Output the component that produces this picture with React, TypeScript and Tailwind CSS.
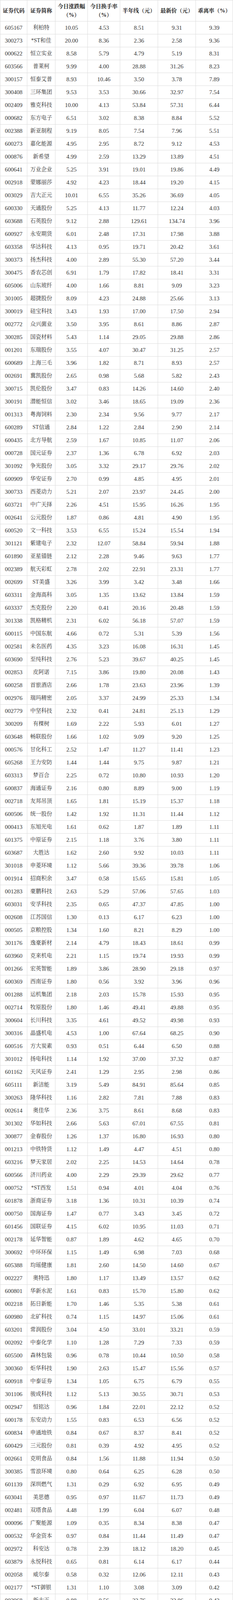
import React from "react";

const raw = `605167 利柏特 10.05 4.53 8.51 9.31 9.39
300273 *ST和佳 20.00 8.36 2.36 2.58 9.36
000622 恒立实业 8.58 5.79 4.79 5.19 8.31
603566 普莱柯 9.99 4.00 28.88 31.26 8.23
300157 恒泰艾普 8.93 10.46 3.50 3.78 7.89
300408 三环集团 9.53 3.53 30.66 32.97 7.54
002409 雅克科技 10.00 4.13 53.84 57.31 6.44
000682 东方电子 6.51 3.02 8.38 8.84 5.52
002388 新亚制程 9.19 8.05 7.54 7.96 5.51
600273 嘉化能源 4.95 2.95 8.72 9.12 4.53
000876 新希望 4.99 2.59 13.29 13.89 4.51
600641 万业企业 5.25 3.91 19.01 19.86 4.49
002918 蒙娜丽莎 4.92 4.23 18.44 19.20 4.15
003029 吉大正元 10.01 6.55 35.26 36.69 4.05
600330 天通股份 5.25 4.13 11.77 12.24 4.03
603688 石英股份 9.12 2.88 129.61 134.74 3.96
600927 永安期货 6.01 2.48 17.31 17.98 3.88
603358 华达科技 4.13 0.95 19.71 20.42 3.61
300373 扬杰科技 4.00 2.89 55.30 57.20 3.44
300475 香农芯创 6.91 1.79 17.82 18.41 3.31
605006 山东玻纤 4.00 1.66 8.81 9.09 3.23
301005 超捷股份 8.09 4.23 24.88 25.66 3.13
300019 硅宝科技 3.43 1.93 17.00 17.50 2.94
002772 众兴菌业 3.50 3.95 8.61 8.86 2.87
300285 国瓷材料 5.43 1.14 29.05 29.88 2.86
001201 东瑞股份 3.55 4.07 30.47 31.25 2.57
600689 上海三毛 3.96 1.82 8.71 8.93 2.57
002691 冀凯股份 2.65 0.98 5.68 5.82 2.43
300715 凯伦股份 3.47 0.83 14.26 14.60 2.40
300191 潜能恒信 3.02 3.46 18.65 19.09 2.36
001313 粤海饲料 2.30 2.34 9.56 9.77 2.17
600289 ST信通 2.84 1.22 2.84 2.90 2.14
600435 北方导航 2.59 1.67 10.85 11.07 2.06
000728 国元证券 2.37 1.36 6.78 6.92 2.03
301092 争光股份 3.05 3.32 29.17 29.76 2.02
600909 华安证券 2.70 0.99 4.85 4.95 2.01
300733 西菱动力 5.21 2.07 23.97 24.45 2.00
603721 中广天择 2.26 4.51 15.95 16.26 1.95
002641 公元股份 1.87 0.86 4.81 4.90 1.95
600520 文一科技 3.53 6.55 15.24 15.54 1.94
301121 紫建电子 2.32 12.07 58.84 59.94 1.88
601890 亚星锚链 2.12 2.28 9.46 9.63 1.77
002389 航天彩虹 2.78 2.02 22.91 23.31 1.77
002699 ST美盛 3.26 3.99 3.42 3.48 1.66
603311 金海高科 3.05 1.35 13.62 13.84 1.59
603337 杰克股份 2.20 0.41 20.16 20.48 1.59
301338 凯格精机 2.31 6.02 56.18 57.07 1.59
600115 中国东航 4.66 0.72 5.31 5.39 1.56
002581 未名医药 4.35 3.23 16.08 16.31 1.45
603690 至纯科技 2.76 5.23 39.67 40.25 1.45
002853 皮阿诺 7.15 3.86 19.80 20.08 1.43
600258 首旅酒店 2.66 1.78 23.63 23.96 1.39
002976 瑞玛精密 2.05 3.37 24.99 25.33 1.34
002779 中坚科技 2.32 0.41 24.81 25.13 1.29
300209 有棵树 1.69 2.22 5.93 6.01 1.27
603648 畅联股份 1.66 1.02 9.09 9.20 1.25
000576 甘化科工 2.52 1.47 11.27 11.41 1.23
605268 王力安防 1.44 1.44 9.75 9.87 1.21
603313 梦百合 2.25 0.72 10.80 10.93 1.20
600837 海通证券 2.16 0.80 8.89 9.00 1.19
002718 友邦吊顶 1.65 1.81 15.19 15.37 1.18
600506 统一股份 1.42 1.92 11.31 11.44 1.12
000413 东旭光电 1.61 0.62 1.87 1.89 1.11
601375 中原证券 2.15 1.18 3.76 3.80 1.11
603687 大胜达 1.62 2.60 9.92 10.03 1.11
301018 申菱环境 1.12 5.66 39.36 39.78 1.06
001914 招商积余 3.47 0.58 15.65 15.81 1.05
001283 豪鹏科技 2.63 5.29 57.06 57.65 1.03
603031 安孚科技 2.35 0.65 47.37 47.85 1.00
002608 江苏国信 1.30 0.13 6.17 6.23 1.00
000505 京粮控股 1.34 1.60 8.21 8.29 1.00
301176 逸豪新材 2.14 4.79 18.43 18.61 0.99
603960 克来机电 2.21 1.15 19.74 19.93 0.99
001266 宏英智能 1.89 3.86 28.90 29.18 0.97
600369 西南证券 1.80 0.56 3.92 3.96 0.96
001288 运机集团 2.18 2.03 15.78 15.93 0.95
002714 牧原股份 1.80 1.46 49.41 49.88 0.95
300604 长川科技 3.35 4.61 49.52 49.98 0.93
300316 晶盛机电 4.53 1.00 67.64 68.25 0.90
600516 方大炭素 0.93 0.51 6.44 6.50 0.88
301012 扬电科技 1.14 1.92 37.00 37.32 0.87
601162 天风证券 2.41 1.29 2.95 2.98 0.86
605111 新洁能 3.19 5.49 84.91 85.64 0.85
300263 隆华科技 1.16 2.82 7.81 7.88 0.83
002614 奥佳华 2.36 3.75 8.61 8.68 0.83
301302 华如科技 2.66 5.63 67.01 67.55 0.81
300877 金春股份 1.26 1.37 16.80 16.93 0.80
001213 中铁特货 1.12 1.49 4.47 4.51 0.80
603216 梦天家居 2.02 2.25 14.53 14.64 0.78
600566 济川药业 4.00 2.29 29.39 29.62 0.77
000752 *ST西发 1.51 0.94 4.01 4.04 0.76
601878 浙商证券 3.18 1.36 10.31 10.39 0.74
000750 国海证券 1.47 0.77 3.43 3.45 0.72
601456 国联证券 4.15 6.02 10.95 11.03 0.71
002178 延华智能 0.87 1.89 4.62 4.65 0.70
300692 中环环保 1.15 1.49 6.98 7.03 0.68
605388 均瑶健康 1.81 2.60 14.50 14.60 0.67
002227 奥特迅 1.80 1.17 13.49 13.57 0.62
600801 华新水泥 1.61 0.83 15.70 15.80 0.62
002218 拓日新能 1.70 1.46 5.35 5.38 0.61
600980 北矿科技 0.74 1.15 14.97 15.06 0.61
603201 常润股份 3.04 4.50 33.01 33.21 0.59
002092 中泰化学 1.10 1.28 7.29 7.33 0.59
605500 森林包装 0.96 0.78 10.44 10.50 0.58
300360 炬华科技 1.90 2.63 15.47 15.56 0.57
600918 中泰证券 1.34 1.05 6.75 6.79 0.55
301106 骏成科技 1.12 5.13 30.55 30.71 0.53
002947 恒铭达 0.96 1.84 22.01 22.12 0.52
600178 东安动力 1.55 0.83 6.53 6.56 0.52
600834 申通地铁 0.84 0.67 8.37 8.41 0.52
600429 三元股份 0.81 0.39 4.92 4.95 0.52
002661 克明食品 0.84 1.56 11.88 11.94 0.50
300385 雪浪环境 0.80 0.64 6.25 6.28 0.50
601139 深圳燃气 1.31 0.29 6.92 6.95 0.49
603041 美思德 0.95 0.97 11.67 11.73 0.49
002481 双塔食品 4.48 1.99 6.04 6.07 0.48
000096 广聚能源 1.09 0.35 8.34 8.38 0.47
000532 华金资本 0.97 0.84 11.44 11.49 0.47
002972 科安达 0.78 2.39 18.12 18.20 0.45
603879 永悦科技 0.65 0.81 6.14 6.17 0.44
002058 威尔泰 0.58 0.32 12.06 12.11 0.43
002177 *ST御银 1.31 1.10 3.08 3.09 0.42
002968 新大正 0.88 0.56 22.76 22.86 0.42
600739 辽宁成大 1.08 0.46 13.11 13.16 0.42
000672 上峰水泥 1.45 0.77 11.87 11.92 0.40
000059 华锦股份 1.21 2.39 7.50 7.53 0.39
603012 创力集团 0.69 1.01 5.80 5.82 0.38
002391 长青股份 0.68 0.97 7.36 7.39 0.36
834415 恒拓开源 1.02 0.17 3.97 3.98 0.33
605151 西上海 2.96 3.18 20.47 20.54 0.32
600182 S*ST佳通 4.98 0.33 13.88 13.92 0.30
000429 粤高速A 1.06 0.32 7.61 7.63 0.30
600581 八一钢铁 0.48 0.75 4.17 4.18 0.29
300411 金盾股份 1.03 0.82 6.87 6.89 0.23
002982 湘佳股份 1.22 3.64 43.73 43.83 0.22
600522 中天科技 3.34 5.01 17.62 17.66 0.21
600908 无锡银行 0.93 0.96 5.42 5.43 0.20
600135 乐凯胶片 0.66 0.89 7.59 7.60 0.19
002333 罗普斯金 0.52 0.43 5.80 5.81 0.18
600477 杭萧钢构 3.33 3.42 4.64 4.65 0.18
300510 金冠股份 0.93 1.93 5.43 5.44 0.16
601099 太平洋 1.91 1.32 2.67 2.67 0.16
600906 财达证券 2.02 2.06 8.07 8.08 0.14
002424 贵州百灵 1.12 3.45 8.14 8.15 0.14
600075 新疆天业 0.18 0.40 5.64 5.65 0.14
600217 中再资环 0.60 0.54 5.05 5.06 0.13
601997 贵阳银行 0.18 0.56 5.51 5.52 0.13
301237 和顺科技 2.16 1.31 32.17 32.21 0.12
600299 安迪苏 1.47 0.39 8.94 8.95 0.12
002067 景兴纸业 0.85 0.58 3.54 3.54 0.12
300783 三只松鼠 1.67 1.50 20.05 20.07 0.11
605296 神农集团 1.55 2.98 26.17 26.20 0.11
300121 阳谷华泰 1.31 1.14 11.63 11.64 0.10
000831 中国稀土 4.23 3.77 35.17 35.20 0.07
301209 联合化学 0.98 4.10 25.70 25.72 0.07
600155 华创阳安 3.51 1.85 7.08 7.08 0.05
603319 湘油泵 2.52 1.77 16.28 16.29 0.03
300940 南极光 2.79 3.48 19.51 19.52 0.03
002274 华昌化工 0.25 0.51 7.98 7.98 0.03
300835 龙磁科技 1.07 5.26 35.79 35.80 0.02
835670 数字人 0.58 1.11 8.64 8.64 0.01
300187 永清环保 5.26 1.52 6.00 6.00 0.00
600846 同济科技 1.60 0.67 8.89 8.89 0.00`;

const rows = raw.split("\n").map((l) => l.trim().split(/\s+/));

function Cell({ children, name }: { children: React.ReactNode; name?: boolean }) {
  return (
    <div
      className={
        name
          ? "flex h-[32px] items-center justify-center overflow-hidden border-r border-[#dddddd] text-[14px] leading-[20px] whitespace-nowrap"
          : "flex h-[32px] items-center justify-center overflow-hidden border-r border-[#dddddd] text-[15px] leading-[20px] whitespace-nowrap"
      }
    >
      {children}
    </div>
  );
}

function HeadCell({ children }: { children: React.ReactNode }) {
  return (
    <div className="flex h-[54px] items-center justify-center overflow-hidden border-r border-[#dddddd] text-center text-[14px] font-bold leading-[22px] whitespace-nowrap text-[#222222]">
      <div>{children}</div>
    </div>
  );
}

export default function App() {
  return (
    <div className="w-[597px] overflow-hidden bg-white font-['Liberation_Serif','Noto_Serif_CJK_SC','Noto_Sans_CJK_SC',serif] text-[14px] leading-[20px] text-[#333333]">
      <div className="border-l border-[#dddddd]">
        <div className="grid h-[55px] grid-cols-[69px_72px_83px_83px_97px_97px_95px] overflow-hidden border-t border-b border-[#dddddd]">
          <HeadCell>证券代码</HeadCell>
          <HeadCell>证券简称</HeadCell>
          <HeadCell>
            今日涨跌幅
            <br />
            （%）
          </HeadCell>
          <HeadCell>
            今日换手率
            <br />
            （%）
          </HeadCell>
          <HeadCell>半年线（元）</HeadCell>
          <HeadCell>最新价（元）</HeadCell>
          <HeadCell>乖离率（%）</HeadCell>
        </div>
        {rows.map((r, ri) => (
          <div
            key={ri}
            className="grid h-[33px] grid-cols-[69px_72px_83px_83px_97px_97px_95px] overflow-hidden border-b border-[#dddddd]"
          >
            {r.map((c, ci) => (
              <Cell key={ci} name={ci === 1}>
                {c}
              </Cell>
            ))}
          </div>
        ))}
      </div>
    </div>
  );
}
